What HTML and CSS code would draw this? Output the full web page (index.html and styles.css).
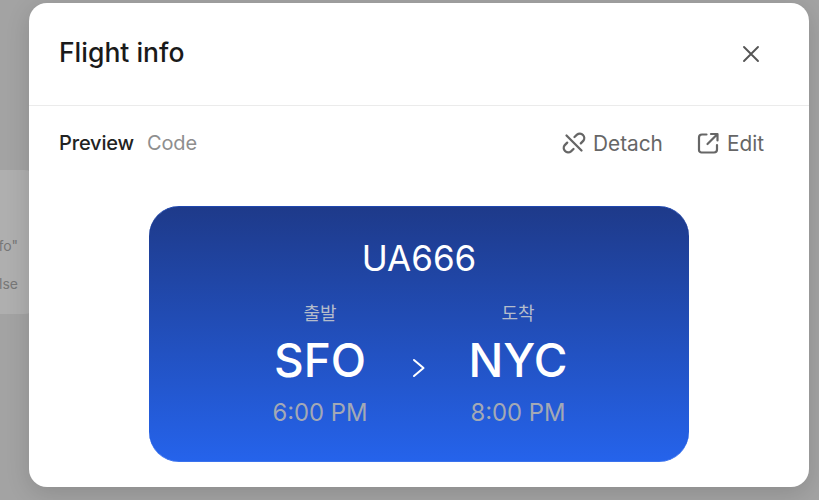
FILE: index.html
```html
<!DOCTYPE html>
<html lang="en">
<head>
<meta charset="utf-8">
<title>Flight info</title>
<link rel="stylesheet" href="styles.css">
</head>
<body>
<div class="backdrop">
  <div class="behind">
    <span class="behind-line">fo"</span>
    <span class="behind-line">lse</span>
  </div>
</div>
<section class="modal">
  <header class="modal-head">
    <h1 class="modal-title">Flight info</h1>
    <button class="close" aria-label="Close">
      <svg width="24" height="24" viewBox="0 0 24 24" fill="none" stroke="#555" stroke-width="1.9" stroke-linecap="round"><path d="M5 5l14 14M19 5L5 19"/></svg>
    </button>
  </header>
  <div class="toolbar">
    <div class="tabs">
      <span class="tab tab-active">Preview</span>
      <span class="tab">Code</span>
    </div>
    <div class="actions">
      <span class="action">
        <svg width="24" height="24" viewBox="0 0 24 24" fill="none" stroke="#666" stroke-width="2.300" stroke-linecap="round" stroke-linejoin="round"><path d="M12.500 6l2.500-2.300a4.400 4.400 0 0 1 6.200 6.200l-2.400 2.500"/><path d="M11.500 18l-2.500 2.300a4.400 4.400 0 0 1-6.200-6.200l2.400-2.500"/><path d="M4.500 4.500l15 15"/></svg>
        Detach
      </span>
      <span class="action">
        <svg width="24" height="24" viewBox="0 0 24 24" fill="none" stroke="#666" stroke-width="2.200" stroke-linecap="round" stroke-linejoin="round"><path d="M10.500 3.500H6a3 3 0 0 0-3 3V19a2.500 2.500 0 0 0 2.500 2.500H18a3 3 0 0 0 3-3V14"/><path d="M11.500 13L21 3.500M15 3h6.500v6.500"/></svg>
        Edit
      </span>
    </div>
  </div>
  <div class="preview">
    <div class="card">
      <div class="flight-no">UA666</div>
      <div class="route">
        <div class="stop">
          <div class="stop-label">출발</div>
          <div class="stop-code">SFO</div>
          <div class="stop-time">6:00 PM</div>
        </div>
        <svg class="chev" width="16" height="24" viewBox="0 0 16 24" fill="none" stroke="#fff" stroke-width="2" stroke-linecap="round" stroke-linejoin="round"><path d="M3 4l9.500 8L3 20"/></svg>
        <div class="stop">
          <div class="stop-label">도착</div>
          <div class="stop-code">NYC</div>
          <div class="stop-time">8:00 PM</div>
        </div>
      </div>
    </div>
  </div>
</section>
</body>
</html>
```
FILE: styles.css
```css
* { box-sizing: border-box; }
html, body { margin: 0; height: 100%; overflow: hidden; }
body {
  background: #a3a3a3;
  font-family: Inter, "Noto Sans CJK KR", sans-serif;
  width: 819px;
  height: 500px;
  position: relative;
}
.backdrop {
  height: 100%;
  display: flex;
  flex-direction: column;
  justify-content: flex-start;
  padding-top: 170px;
}
.behind {
  width: 40px;
  height: 144px;
  background: #afafaf;
  border-radius: 0 16px 16px 0;
  color: #777;
  font-size: 14px;
  line-height: 20px;
  display: flex;
  flex-direction: column;
  align-items: flex-end;
  gap: 18px;
  padding: 66px 22px 0 0;
}
.behind-line { display: block; }
.modal {
  position: absolute;
  left: 29px;
  top: 3px;
  width: 780px;
  height: 484px;
  background: #fff;
  border-radius: 18px;
  box-shadow: 0 6px 24px rgba(0,0,0,.14);
  display: flex;
  flex-direction: column;
}
.modal-head {
  height: 103px;
  flex: none;
  border-bottom: 1px solid #ebebeb;
  display: flex;
  align-items: center;
  justify-content: space-between;
  padding: 0 46px 4px 30px;
}
.modal-title {
  margin: 0;
  font-size: 26.500px;
  font-weight: 500;
  color: #1a1a1a;
}
.close {
  border: 0;
  background: none;
  padding: 0;
  width: 24px;
  height: 24px;
  margin-top: 3px;
}
.toolbar {
  height: 76px;
  flex: none;
  display: flex;
  align-items: center;
  justify-content: space-between;
  padding: 0 45px 2px 30px;
}
.tabs { display: flex; gap: 13px; }
.tab { font-size: 20px; color: #8e8e8e; letter-spacing: -0.15px; }
.tab-active { color: #222; font-weight: 500; }
.actions { display: flex; gap: 33px; }
.action {
  display: flex;
  align-items: center;
  gap: 7px;
  font-size: 20.800px;
  color: #666;
}
.preview {
  flex: 1;
  display: flex;
  justify-content: center;
  padding-top: 24px;
}
.card {
  width: 540px;
  height: 256px;
  border-radius: 30px;
  background: linear-gradient(180deg, #1e3a8a, #2563eb);
  border-top: 1px solid #1f47ae;
  border-bottom: 1px solid #3a72ee;
  color: #fff;
  display: flex;
  flex-direction: column;
  align-items: center;
  padding-top: 27px;
}
.flight-no { font-size: 35px; line-height: 48px; }
.route {
  display: flex;
  align-items: center;
  gap: 43px;
  margin-top: 20px;
}
.stop {
  display: flex;
  flex-direction: column;
  align-items: center;
  width: 96px;
}
.stop-label { font-size: 18px; line-height: 24px; color: #b4bccb; }
.stop-code { font-size: 46px; line-height: 60px; margin-top: 4px; font-weight: 500; }
.stop-time { font-size: 23.800px; line-height: 32px; margin-top: 7px; color: #a3a9b5; white-space: nowrap; }
.chev { margin-top: 5px; }
```
